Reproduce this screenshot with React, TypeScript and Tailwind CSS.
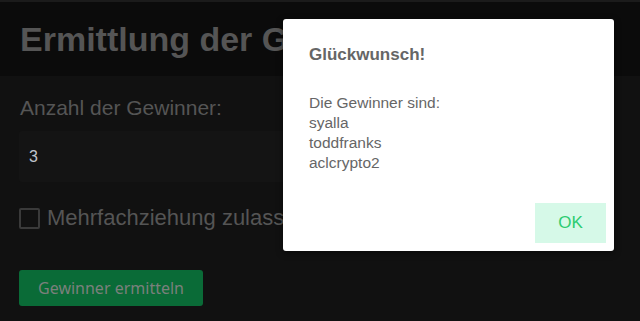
export default function App() {
  const winners = ["syalla", "toddfranks", "aclcrypto2"];
  return (
    <div className="relative w-[640px] h-[321px] overflow-hidden bg-[#111111] font-['Liberation_Sans',Arial,sans-serif]">
      <div className="h-[2px] bg-[#1b1b1b]" />
      <header className="h-[74px] bg-[#0b0b0b] flex items-center px-[20px]">
        <h1 className="text-[34px] font-bold text-[#555555] leading-none whitespace-nowrap">Ermittlung der Gewinner</h1>
      </header>
      <main className="px-[19px] pt-[20px] flex flex-col">
        <label className="text-[21px] text-[#555555] leading-[24px] pl-px">Anzahl der Gewinner:</label>
        <div className="mt-[11px] h-[51px] w-[560px] bg-[#141414] rounded-[3px] flex items-center px-[10px]">
          <span className="text-[16px] text-[#c0c4cc]">3</span>
        </div>
        <div className="mt-[24px] flex items-center gap-[7px]">
          <div className="w-[21px] h-[21px] border-2 border-[#3a3a3a] rounded-[2px]" />
          <span className="text-[22px] text-[#555555] leading-[24px] whitespace-nowrap">Mehrfachziehung zulassen</span>
        </div>
        <div className="mt-[40px]">
          <button className="h-[36px] w-[184px] bg-[#0a6b37] rounded-[3px] text-[16px] text-[#7a807c] font-['Noto_Sans',sans-serif]">
            Gewinner ermitteln
          </button>
        </div>
      </main>

      <div className="absolute left-[283px] top-[19px] w-[331px] h-[232px] bg-white rounded-[3px] shadow-[0_2px_6px_rgba(0,0,0,0.5)] flex flex-col">
        <h2 className="mt-[26px] ml-[26px] text-[17px] font-bold text-[#666666] leading-[20px]">Glückwunsch!</h2>
        <div className="mt-[28px] ml-[26px] text-[15.5px] text-[#666666] leading-[20px]">
          <div>Die Gewinner sind:</div>
          {winners.map((w) => (
            <div key={w}>{w}</div>
          ))}
        </div>
        <div className="mt-auto mb-[8px] mr-[8px] flex justify-end">
          <button className="w-[71px] h-[40px] bg-[#d6f9e8] text-[#2ecc71] text-[17px]">OK</button>
        </div>
      </div>
    </div>
  );
}
